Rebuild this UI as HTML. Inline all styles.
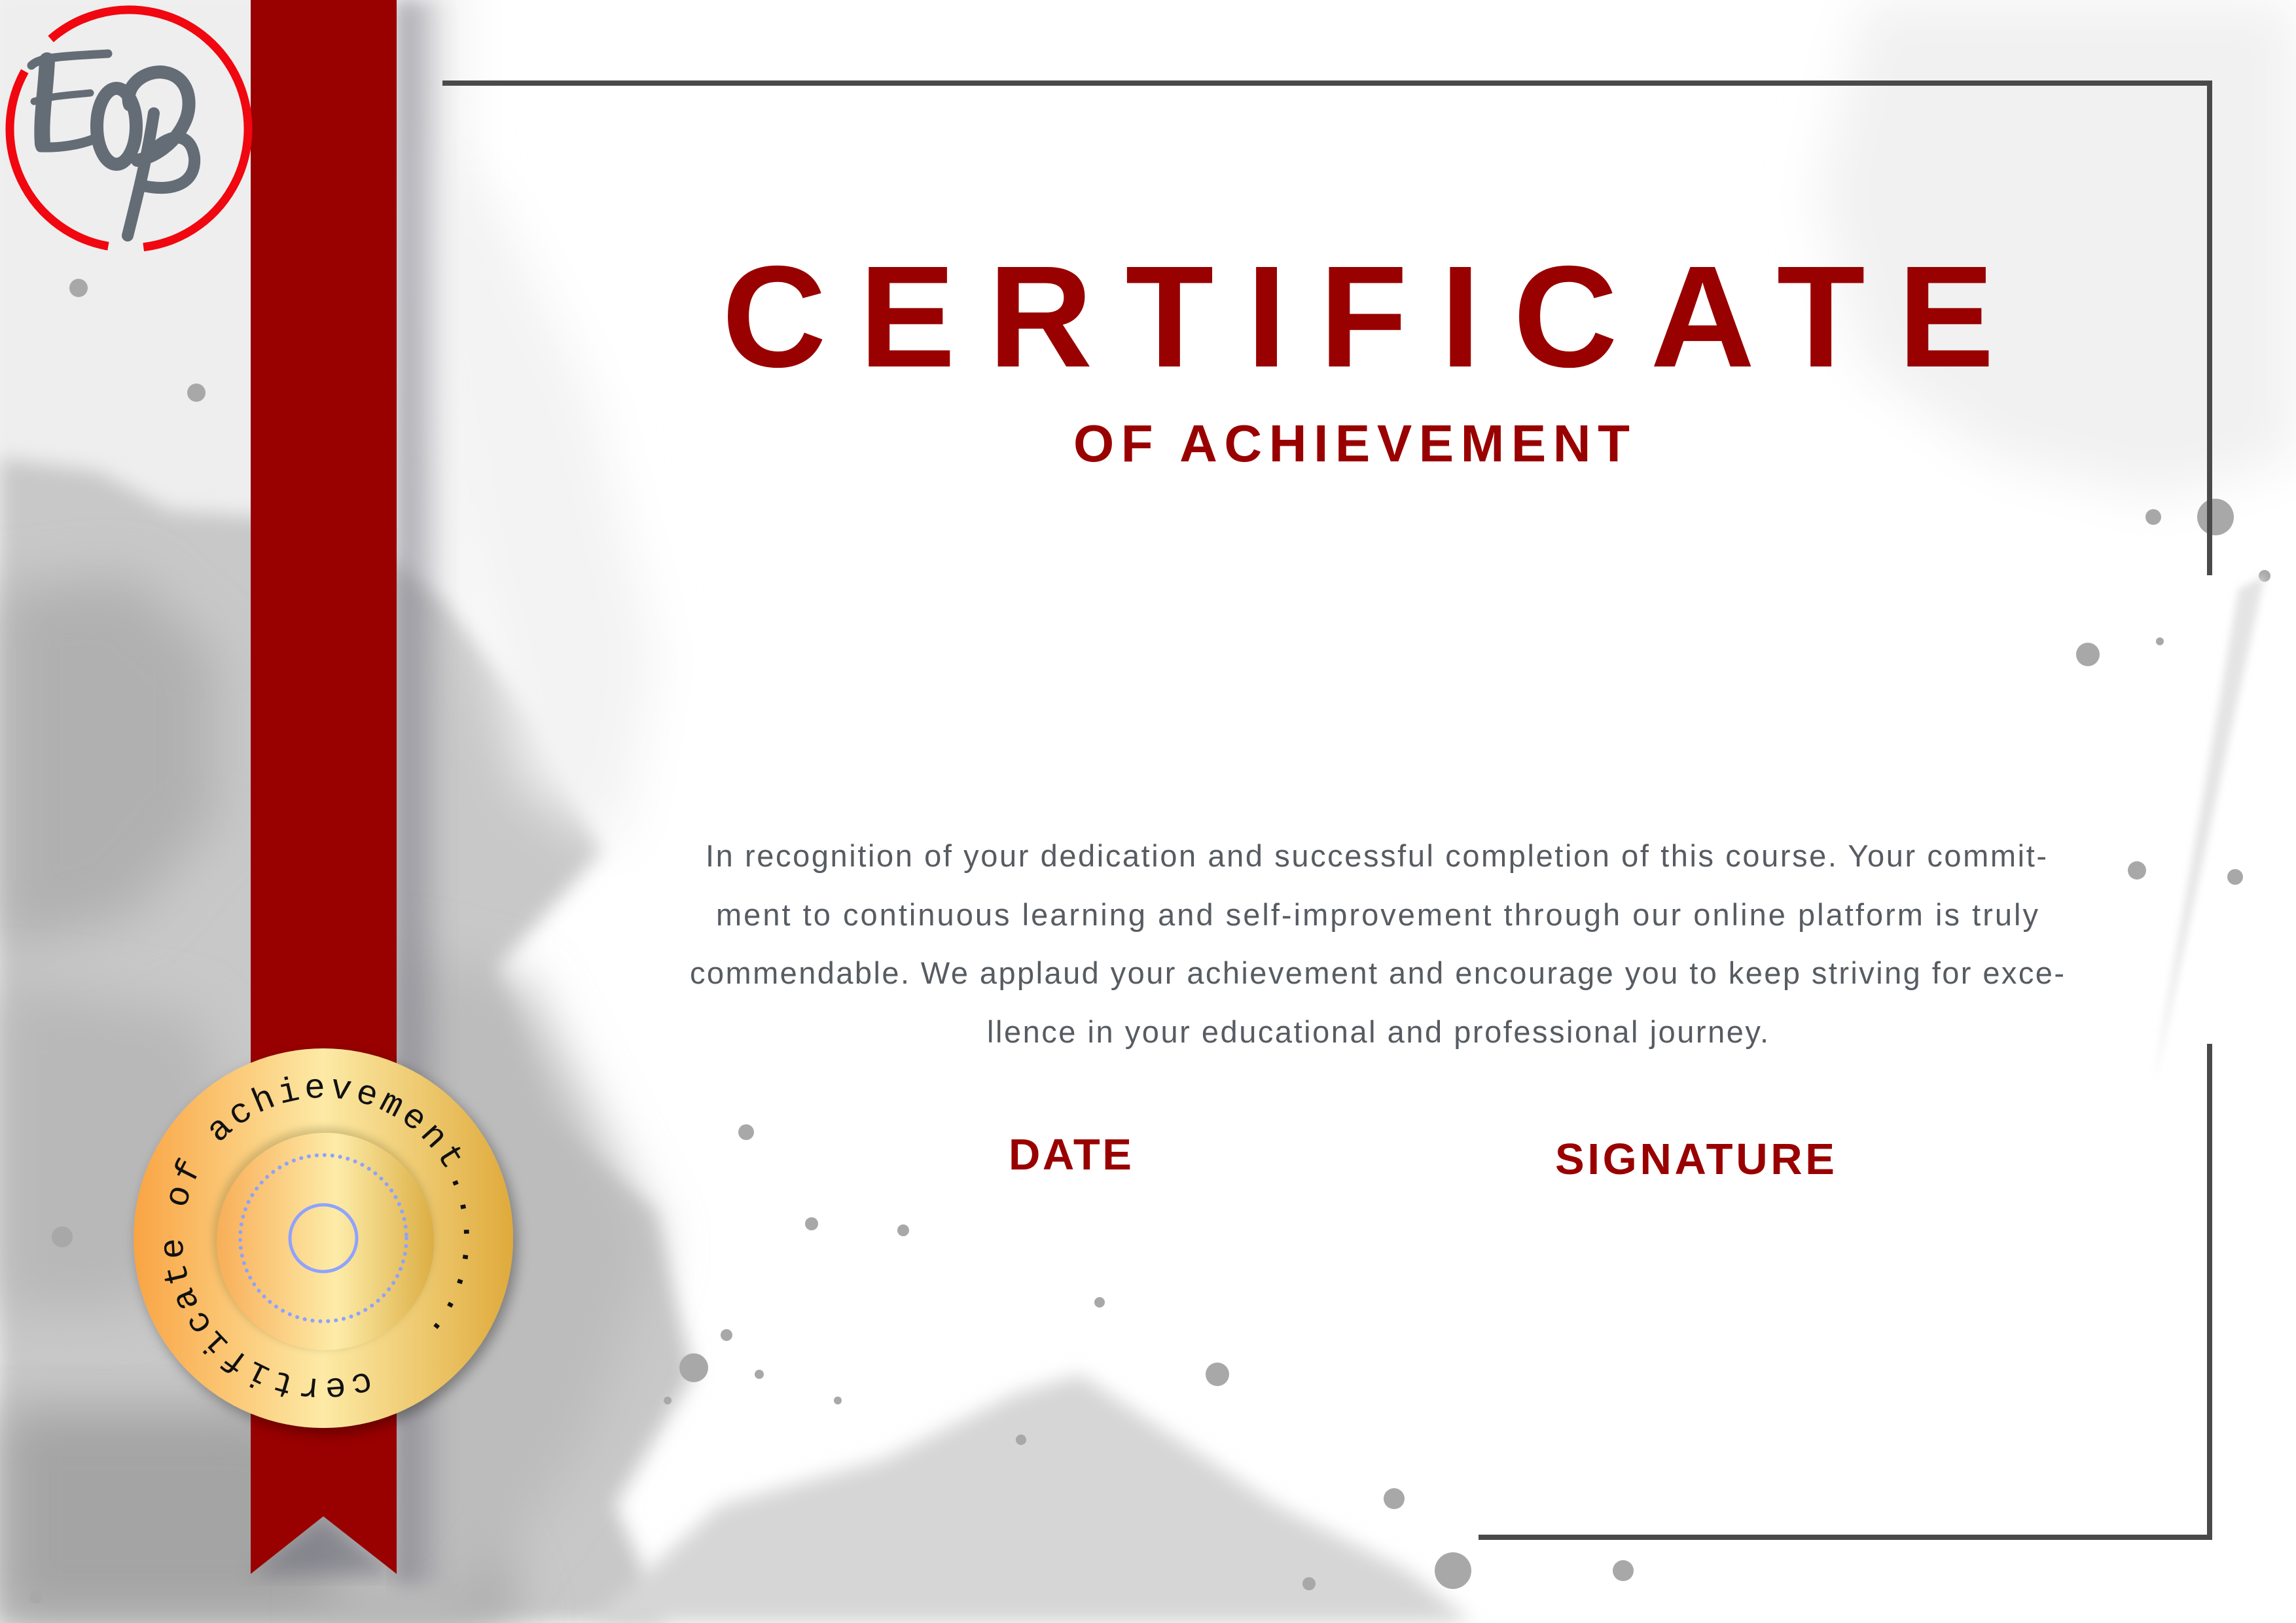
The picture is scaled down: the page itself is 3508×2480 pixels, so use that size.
<!DOCTYPE html>
<html><head><meta charset="utf-8"><style>
html,body{margin:0;padding:0;background:#fff}
svg{display:block}
</style></head><body>
<svg width="3508" height="2480" viewBox="0 0 3508 2480" xmlns="http://www.w3.org/2000/svg">
<defs>
<filter id="b40" x="-20%" y="-20%" width="140%" height="140%"><feGaussianBlur stdDeviation="40"/></filter>
<filter id="b15" x="-20%" y="-20%" width="140%" height="140%"><feGaussianBlur stdDeviation="15"/></filter>
<filter id="b6" x="-50%" y="-50%" width="200%" height="200%"><feGaussianBlur stdDeviation="6"/></filter>
<filter id="sh" x="-20%" y="-20%" width="140%" height="140%"><feDropShadow dx="6" dy="8" stdDeviation="10" flood-color="#000" flood-opacity="0.35"/></filter>
<linearGradient id="g1" x1="0" y1="0" x2="1" y2="0">
<stop offset="0" stop-color="#f9a444"/><stop offset="0.5" stop-color="#fdeaa6"/><stop offset="1" stop-color="#dfaa3c"/></linearGradient>
<linearGradient id="g2" x1="0" y1="0" x2="1" y2="0">
<stop offset="0" stop-color="#f8ae58"/><stop offset="0.55" stop-color="#fdeca8"/><stop offset="1" stop-color="#dcae44"/></linearGradient>
<linearGradient id="rs" x1="0" y1="0" x2="1" y2="0">
<stop offset="0" stop-color="#6a6a78"/><stop offset="1" stop-color="#6a6a78" stop-opacity="0"/></linearGradient>
<path id="sp" d="M564,2095.3 A215,215 0 1,1 424,1688.7 A215,215 0 1,1 564,2095.3"/>
</defs>
<rect width="3508" height="2480" fill="#fff"/>
<rect x="-60" y="-60" width="760" height="2600" fill="#eeeeee" filter="url(#b40)"/>
<path d="M2850,0 L3508,0 L3508,700 3300,760 3050,700 2850,560 2780,300 Z" fill="#f1f1f1" filter="url(#b40)"/>
<path d="M0,700 L150,720 260,780 400,790 560,830 680,920 820,1100 920,1300 760,1480 820,1700 1000,1850 1060,2100 940,2300 1020,2480 0,2480 Z" fill="#c8c8c8" filter="url(#b15)"/>
<path d="M0,900 L200,880 330,1000 330,1250 200,1400 0,1450 Z" fill="#b0b0b0" filter="url(#b40)"/>
<path d="M0,1500 L300,1550 380,1800 200,2000 0,2000 Z" fill="#b8b8b8" filter="url(#b40)"/>
<path d="M0,2150 L400,2150 700,2250 800,2480 0,2480 Z" fill="#a4a4a4" filter="url(#b40)"/>
<path d="M600,1450 L800,1500 900,1700 1000,1900 900,2200 700,2480 500,2480 560,2000 Z" fill="#bcbcbc" filter="url(#b40)"/>
<path d="M900,2480 L1100,2300 1350,2230 1550,2130 1650,2100 1800,2200 1950,2300 2150,2400 2250,2480 Z" fill="#d6d6d6" filter="url(#b15)"/>
<path d="M610,200 L750,300 900,600 1000,1000 950,1300 800,1200 700,800 Z" fill="#f3f3f3" filter="url(#b40)"/>
<g fill="#a8a8a8">
<circle cx="1060" cy="2090" r="22"/><circle cx="1110" cy="2040" r="9"/><circle cx="1160" cy="2100" r="7"/><circle cx="1020" cy="2140" r="6"/><circle cx="1860" cy="2100" r="18"/><circle cx="2130" cy="2290" r="16"/><circle cx="2220" cy="2400" r="28"/><circle cx="2480" cy="2400" r="16"/><circle cx="1140" cy="1730" r="12"/><circle cx="1240" cy="1870" r="10"/><circle cx="1680" cy="1990" r="8"/><circle cx="1380" cy="1880" r="9"/><circle cx="3190" cy="1000" r="18"/><circle cx="3290" cy="790" r="12"/><circle cx="3385" cy="790" r="28"/><circle cx="3415" cy="1340" r="12"/><circle cx="3265" cy="1330" r="14"/><circle cx="120" cy="440" r="14"/><circle cx="300" cy="600" r="14"/><circle cx="95" cy="1890" r="16"/><circle cx="55" cy="2440" r="10"/><circle cx="2000" cy="2420" r="10"/><circle cx="1560" cy="2200" r="8"/><circle cx="1280" cy="2140" r="6"/><circle cx="3460" cy="880" r="9"/><circle cx="3300" cy="980" r="6"/>
</g>
<path d="M3420,900 L3460,880 3380,1250 3290,1660 Z" fill="#e4e4e4" filter="url(#b6)"/>
<rect x="606" y="0" width="80" height="2420" fill="url(#rs)" opacity="0.6" filter="url(#b15)"/>
<path d="M383,2405 L494,2317 L606,2405 Z" fill="#6e6e7c" opacity="0.6" filter="url(#b15)"/>
<path d="M383,0 L606,0 L606,2405 L494,2317 L383,2405 Z" fill="#990000"/>
<g fill="none" stroke="#4a4a4a" stroke-width="8">
<path d="M676,127 L3376,127 L3376,879"/>
<path d="M3376,1595 L3376,2349 L2259,2349"/>
</g>
<g fill="none" stroke="#f0070f" stroke-width="13">
<path d="M165.4,376.2 A182,182 0 0,1 37.8,108.8"/>
<path d="M77.6,59.6 A182,182 0 1,1 219.2,377.6"/>
</g>
<g fill="none" stroke="#646c76" stroke-linecap="round">
<path d="M48,100 C60,88 90,86 165,82" stroke-width="13"/>
<path d="M72,92 C70,140 62,180 65,220" stroke-width="24"/>
<path d="M52,155 C80,146 110,145 138,142" stroke-width="11"/>
<path d="M62,225 C90,226 120,222 145,212" stroke-width="15"/>
<ellipse cx="178" cy="193" rx="30" ry="58" stroke-width="20"/>
<path d="M198,160 C190,135 215,110 245,110 C285,112 295,150 285,180 C270,220 235,240 210,245" stroke-width="20"/>
<path d="M235,173 C225,240 210,300 195,360" stroke-width="18"/>
<path d="M222,243 C250,205 290,195 297,240 C300,280 265,295 215,283" stroke-width="18"/>
</g>
<circle cx="494" cy="1892" r="290" fill="url(#g1)" filter="url(#sh)"/>
<circle cx="494" cy="1892" r="169" fill="#8a7a40" opacity="0.35" filter="url(#b6)"/>
<circle cx="497" cy="1897" r="166" fill="url(#g2)"/>
<circle cx="494" cy="1892" r="127" fill="none" stroke="#8fa2ff" stroke-width="6" stroke-dasharray="0.1 11.9" stroke-linecap="round"/>
<circle cx="494" cy="1892" r="51" fill="none" stroke="#8fa2ff" stroke-width="5"/>
<text font-family="Liberation Mono, monospace" font-size="53" fill="#111" letter-spacing="6"><textPath href="#sp">certificate of achievement.......</textPath></text>
<text x="1103" y="560" font-family="Liberation Sans, Arial, sans-serif" font-weight="bold" font-size="221" fill="#990000" textLength="1944" lengthAdjust="spacing">CERTIFICATE</text>
<text x="1640" y="705" font-family="Liberation Sans, Arial, sans-serif" font-weight="bold" font-size="80" fill="#990000" textLength="850" lengthAdjust="spacing">OF ACHIEVEMENT</text>
<g font-family="Liberation Sans, Arial, sans-serif" font-size="47" fill="#575c62">
<text x="1078" y="1324" textLength="2049" lengthAdjust="spacing">In recognition of your dedication and successful completion of this course. Your commit-</text>
<text x="1094" y="1414" textLength="2020" lengthAdjust="spacing">ment to continuous learning and self-improvement through our online platform is truly</text>
<text x="1054" y="1503" textLength="2100" lengthAdjust="spacing">commendable. We applaud your achievement and encourage you to keep striving for exce-</text>
<text x="1508" y="1593" textLength="1194" lengthAdjust="spacing">llence in your educational and professional journey.</text>
</g>
<text x="1541" y="1787" font-family="Liberation Sans, Arial, sans-serif" font-weight="bold" font-size="67" fill="#990000" textLength="188" lengthAdjust="spacing">DATE</text>
<text x="2376" y="1794" font-family="Liberation Sans, Arial, sans-serif" font-weight="bold" font-size="67" fill="#990000" textLength="427" lengthAdjust="spacing">SIGNATURE</text>
</svg>
</body></html>
